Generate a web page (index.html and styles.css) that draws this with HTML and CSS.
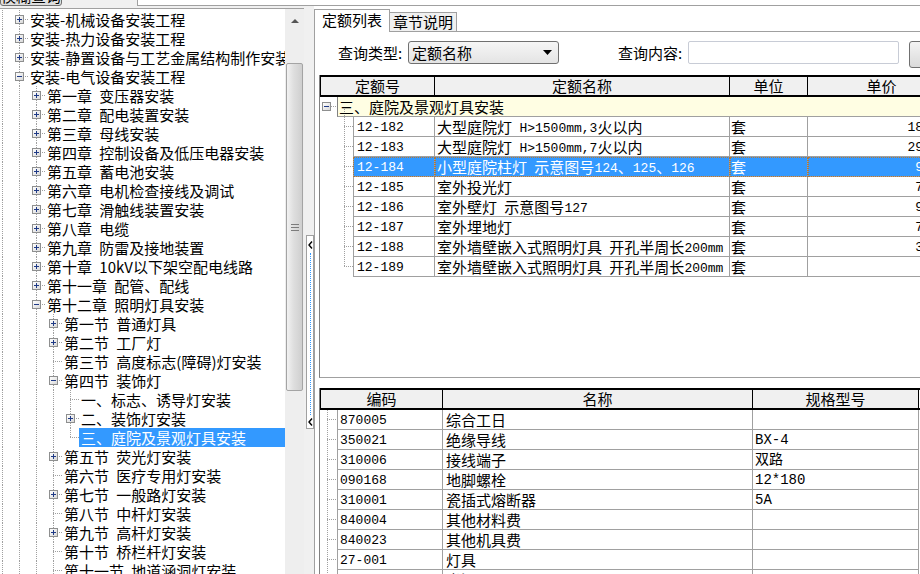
FILE: index.html
```html
<!DOCTYPE html>
<html lang="zh-CN">
<head>
<meta charset="utf-8">
<title>定额查询</title>
<link rel="stylesheet" href="styles.css">
</head>
<body>
<div class="topbar">
  <div class="topbtn">模糊查询</div>
  <div class="topinput"></div>
</div>
<div class="main">
  <div class="left">
    <div class="treebox">
      <div class="tree">
        <div class="tree-inner">
          <div class="tr"><span class="g v"></span><span class="n"><span class="box p"></span></span><span class="t">安装-机械设备安装工程</span></div>
          <div class="tr"><span class="g v"></span><span class="n"><span class="box p"></span></span><span class="t">安装-热力设备安装工程</span></div>
          <div class="tr"><span class="g v"></span><span class="n"><span class="box p"></span></span><span class="t">安装-静置设备与工艺金属结构制作安装工程</span></div>
          <div class="tr"><span class="g v"></span><span class="n"><span class="box m"></span></span><span class="t">安装-电气设备安装工程</span></div>
          <div class="tr"><span class="g v"></span><span class="g v"></span><span class="n"><span class="box p"></span></span><span class="t">第一章 变压器安装</span></div>
          <div class="tr"><span class="g v"></span><span class="g v"></span><span class="n"><span class="box p"></span></span><span class="t">第二章 配电装置安装</span></div>
          <div class="tr"><span class="g v"></span><span class="g v"></span><span class="n"><span class="box p"></span></span><span class="t">第三章 母线安装</span></div>
          <div class="tr"><span class="g v"></span><span class="g v"></span><span class="n"><span class="box p"></span></span><span class="t">第四章 控制设备及低压电器安装</span></div>
          <div class="tr"><span class="g v"></span><span class="g v"></span><span class="n"><span class="box p"></span></span><span class="t">第五章 蓄电池安装</span></div>
          <div class="tr"><span class="g v"></span><span class="g v"></span><span class="n"><span class="box p"></span></span><span class="t">第六章 电机检查接线及调试</span></div>
          <div class="tr"><span class="g v"></span><span class="g v"></span><span class="n"><span class="box p"></span></span><span class="t">第七章 滑触线装置安装</span></div>
          <div class="tr"><span class="g v"></span><span class="g v"></span><span class="n"><span class="box p"></span></span><span class="t">第八章 电缆</span></div>
          <div class="tr"><span class="g v"></span><span class="g v"></span><span class="n"><span class="box p"></span></span><span class="t">第九章 防雷及接地装置</span></div>
          <div class="tr"><span class="g v"></span><span class="g v"></span><span class="n"><span class="box p"></span></span><span class="t">第十章 10kV以下架空配电线路</span></div>
          <div class="tr"><span class="g v"></span><span class="g v"></span><span class="n"><span class="box p"></span></span><span class="t">第十一章 配管、配线</span></div>
          <div class="tr"><span class="g v"></span><span class="g v"></span><span class="n"><span class="box m"></span></span><span class="t">第十二章 照明灯具安装</span></div>
          <div class="tr"><span class="g v"></span><span class="g v"></span><span class="g v"></span><span class="n"><span class="box p"></span></span><span class="t">第一节 普通灯具</span></div>
          <div class="tr"><span class="g v"></span><span class="g v"></span><span class="g v"></span><span class="n"><span class="box p"></span></span><span class="t">第二节 工厂灯</span></div>
          <div class="tr"><span class="g v"></span><span class="g v"></span><span class="g v"></span><span class="n"></span><span class="t">第三节 高度标志(障碍)灯安装</span></div>
          <div class="tr"><span class="g v"></span><span class="g v"></span><span class="g v"></span><span class="n"><span class="box m"></span></span><span class="t">第四节 装饰灯</span></div>
          <div class="tr"><span class="g v"></span><span class="g v"></span><span class="g v"></span><span class="g v"></span><span class="n"></span><span class="t">一、标志、诱导灯安装</span></div>
          <div class="tr"><span class="g v"></span><span class="g v"></span><span class="g v"></span><span class="g v"></span><span class="n"><span class="box p"></span></span><span class="t">二、装饰灯安装</span></div>
          <div class="tr"><span class="g v"></span><span class="g v"></span><span class="g v"></span><span class="g v"></span><span class="n last"></span><span class="t sel">三、庭院及景观灯具安装</span></div>
          <div class="tr"><span class="g v"></span><span class="g v"></span><span class="g v"></span><span class="n"><span class="box p"></span></span><span class="t">第五节 荧光灯安装</span></div>
          <div class="tr"><span class="g v"></span><span class="g v"></span><span class="g v"></span><span class="n"></span><span class="t">第六节 医疗专用灯安装</span></div>
          <div class="tr"><span class="g v"></span><span class="g v"></span><span class="g v"></span><span class="n"><span class="box p"></span></span><span class="t">第七节 一般路灯安装</span></div>
          <div class="tr"><span class="g v"></span><span class="g v"></span><span class="g v"></span><span class="n"></span><span class="t">第八节 中杆灯安装</span></div>
          <div class="tr"><span class="g v"></span><span class="g v"></span><span class="g v"></span><span class="n"><span class="box p"></span></span><span class="t">第九节 高杆灯安装</span></div>
          <div class="tr"><span class="g v"></span><span class="g v"></span><span class="g v"></span><span class="n"></span><span class="t">第十节 桥栏杆灯安装</span></div>
          <div class="tr"><span class="g v"></span><span class="g v"></span><span class="g v"></span><span class="n"></span><span class="t">第十一节 地道涵洞灯安装</span></div>
        </div>
      </div>
      <div class="vscroll">
        <div class="up"></div>
        <div class="thumb"><div class="grip"></div></div>
      </div>
    </div>
  </div>
  <div class="mid">
    <div class="splitter">
      <svg class="chev" width="5" height="8" viewBox="0 0 5 8"><path d="M4 0.5 L1 4 L4 7.5" fill="none" stroke="#000" stroke-width="1.4"/></svg>
      <div class="sdots"></div>
      <svg class="chev" width="5" height="8" viewBox="0 0 5 8"><path d="M4 0.5 L1 4 L4 7.5" fill="none" stroke="#000" stroke-width="1.4"/></svg>
    </div>
  </div>
  <div class="right">
    <div class="tabs">
      <div class="tab active">定额列表</div>
      <div class="tab idle">章节说明</div>
    </div>
    <div class="page">
      <div class="query">
        <div class="qlabel">查询类型:</div>
        <div class="select"><span>定额名称</span><svg width="9" height="5" viewBox="0 0 9 5"><path d="M0 0H9L4.5 5Z" fill="#000"/></svg></div>
        <div class="qlabel qlabel2">查询内容:</div>
        <div class="qinput"></div>
        <div class="qbtn"></div>
      </div>

      <div class="grid1">
        <div class="hdr">
          <div class="hc c1">定额号</div>
          <div class="hc c2">定额名称</div>
          <div class="hc c3">单位</div>
          <div class="hc c4">单价</div>
        </div>
        <div class="grp">
          <div class="gexp"><span class="box m gbox"></span></div>
          <div class="gtext">三、庭院及景观灯具安装</div>
        </div>
        <div class="grow"><div class="tl1"></div><div class="dc code mono">12-182</div><div class="dc name">大型庭院灯 <span class="a">H&gt;1500mm,3</span>火以内</div><div class="dc unit">套</div><div class="dc price mono">1865.24</div></div>
        <div class="grow"><div class="tl1"></div><div class="dc code mono">12-183</div><div class="dc name">大型庭院灯 <span class="a">H&gt;1500mm,7</span>火以内</div><div class="dc unit">套</div><div class="dc price mono">2946.31</div></div>
        <div class="grow sel"><div class="tl1"></div><div class="dc code mono">12-184</div><div class="dc name">小型庭院柱灯 示意图号<span class="a">124</span>、<span class="a">125</span>、<span class="a">126</span></div><div class="dc unit">套</div><div class="dc price mono">966.76</div></div>
        <div class="grow"><div class="tl1"></div><div class="dc code mono">12-185</div><div class="dc name">室外投光灯</div><div class="dc unit">套</div><div class="dc price mono">735.52</div></div>
        <div class="grow"><div class="tl1"></div><div class="dc code mono">12-186</div><div class="dc name">室外壁灯 示意图号<span class="a">127</span></div><div class="dc unit">套</div><div class="dc price mono">942.18</div></div>
        <div class="grow"><div class="tl1"></div><div class="dc code mono">12-187</div><div class="dc name">室外埋地灯</div><div class="dc unit">套</div><div class="dc price mono">728.64</div></div>
        <div class="grow"><div class="tl1"></div><div class="dc code mono">12-188</div><div class="dc name">室外墙壁嵌入式照明灯具 开孔半周长<span class="a">200mm</span></div><div class="dc unit">套</div><div class="dc price mono">355.47</div></div>
        <div class="grow"><div class="tl1 last"></div><div class="dc code mono">12-189</div><div class="dc name">室外墙壁嵌入式照明灯具 开孔半周长<span class="a">200mm</span></div><div class="dc unit">套</div><div class="dc price mono"></div></div>
      </div>

      <div class="grid2">
        <div class="hdr">
          <div class="hc d1">编码</div>
          <div class="hc d2">名称</div>
          <div class="hc d3">规格型号</div>
        </div>
        <div class="grow"><div class="tl2"></div><div class="dc code2 mono">870005</div><div class="dc name2">综合工日</div><div class="dc spec mono"></div></div>
        <div class="grow"><div class="tl2"></div><div class="dc code2 mono">350021</div><div class="dc name2">绝缘导线</div><div class="dc spec mono">BX-4</div></div>
        <div class="grow"><div class="tl2"></div><div class="dc code2 mono">310006</div><div class="dc name2">接线端子</div><div class="dc spec mono">双路</div></div>
        <div class="grow"><div class="tl2"></div><div class="dc code2 mono">090168</div><div class="dc name2">地脚螺栓</div><div class="dc spec mono">12*180</div></div>
        <div class="grow"><div class="tl2"></div><div class="dc code2 mono">310001</div><div class="dc name2">瓷插式熔断器</div><div class="dc spec mono">5A</div></div>
        <div class="grow"><div class="tl2"></div><div class="dc code2 mono">840004</div><div class="dc name2">其他材料费</div><div class="dc spec mono"></div></div>
        <div class="grow"><div class="tl2"></div><div class="dc code2 mono">840023</div><div class="dc name2">其他机具费</div><div class="dc spec mono"></div></div>
        <div class="grow"><div class="tl2"></div><div class="dc code2 mono">27-001</div><div class="dc name2">灯具</div><div class="dc spec mono"></div></div>
        <div class="grow"><div class="tl2"></div><div class="dc code2 mono"></div><div class="dc name2">光源</div><div class="dc spec mono"></div></div>
      </div>
    </div>
  </div>
</div>
</body>
</html>
```
FILE: styles.css
```css
* { box-sizing: border-box; }
html, body { margin: 0; padding: 0; }
body {
  width: 920px;
  height: 574px;
  overflow: hidden;
  background: #f0f0f0;
  font-family: "Noto Sans CJK SC", sans-serif;
  font-size: 15px;
  color: #000;
  word-spacing: 4px;
}

/* top strip */
.topbar { height: 6px; display: flex; overflow: hidden; }
.topbtn {
  flex: none;
  width: 62px;
  height: 20px;
  margin-top: -14px;
  border: 1px solid #707070;
  border-radius: 3px;
  background: linear-gradient(#f2f2f2, #dcdcdc);
  line-height: 18px;
  text-align: center;
  white-space: nowrap;
  overflow: hidden;
}
.topinput {
  flex: 1;
  margin-left: 75px;
  height: 6px;
  background: #fff;
  border-left: 1px solid #a0a0a0;
  border-bottom: 1px solid #a0a0a0;
}

.main { display: flex; height: 568px; }

/* left tree */
.left { flex: none; width: 304px; padding-top: 2px; display: flex; flex-direction: column; }
.treebox { flex: 1; display: flex; border-top: 1px solid #a0a0a0; background: #fff; min-height: 0; }
.tree { flex: none; width: 285px; overflow: hidden; padding-top: 1px; }
.tree-inner { margin-left: -6px; }
.tr { display: flex; height: 19px; white-space: nowrap; }
.g, .n { flex: none; display: block; width: 17px; height: 19px; }
.v {
  background-image: repeating-linear-gradient(to bottom, #a0a0a0 0 1px, transparent 1px 2px);
  background-size: 1px 100%;
  background-position: 8px 0;
  background-repeat: no-repeat;
}
.n {
  background-image:
    repeating-linear-gradient(to bottom, #a0a0a0 0 1px, transparent 1px 2px),
    repeating-linear-gradient(to right, #a0a0a0 0 1px, transparent 1px 2px);
  background-size: 1px 100%, 9px 1px;
  background-position: 8px 0, 8px 9px;
  background-repeat: no-repeat;
}
.n.last { background-size: 1px 10px, 9px 1px; }
.box {
  display: block;
  width: 9px;
  height: 9px;
  margin: 5px 0 0 4px;
  border: 1px solid #8e8f8f;
}
.box.m {
  background:
    linear-gradient(#1f3a86, #1f3a86) center / 5px 1px no-repeat,
    linear-gradient(135deg, #ffffff, #d8d8d8);
}
.box.p {
  background:
    linear-gradient(#1f3a86, #1f3a86) center / 5px 1px no-repeat,
    linear-gradient(#1f3a86, #1f3a86) center / 1px 5px no-repeat,
    linear-gradient(135deg, #ffffff, #d8d8d8);
}
.t { line-height: 19px; padding: 0 2px; }
.t.sel { flex: 1; background: #3399ff; color: #fff; }

.vscroll {
  flex: none;
  width: 19px;
  background: #eeeeee;
  display: flex;
  flex-direction: column;
  align-items: center;
}
.up {
  margin-top: 10px;
  width: 0;
  height: 0;
  border-left: 4px solid transparent;
  border-right: 4px solid transparent;
  border-bottom: 4px solid #555;
}
.thumb {
  margin-top: 40px;
  width: 17px;
  height: 328px;
  border: 1px solid #a4a4a4;
  border-radius: 2px;
  background: linear-gradient(to right, #f2f2f2, #dedede 45%, #cfcfcf);
  display: flex;
  align-items: center;
  justify-content: center;
}
.grip {
  width: 8px;
  height: 7px;
  background: repeating-linear-gradient(to bottom, #7c7c7c 0 1px, transparent 1px 3px);
}

/* splitter */
.mid { flex: none; width: 10px; }
.splitter {
  margin: 229px 0 0 2px;
  width: 8px;
  height: 194px;
  border: 1px solid #a0a0a0;
  background: #fff;
  display: flex;
  flex-direction: column;
  align-items: center;
  padding: 5px 0 2px;
}
.chev { flex: none; display: block; }
.sdots { flex: 1; width: 1px; margin: 4px 0 3px 1px; border-left: 1px dotted #3399ff; }

/* right */
.right { flex: 1; min-width: 0; background: #fff; display: flex; flex-direction: column; overflow: hidden; }
.tabs { flex: none; display: flex; align-items: flex-end; height: 25px; }
.tab {
  flex: none;
  border: 1px solid #a0a0a0;
  border-bottom: none;
  text-align: center;
  margin-bottom: -1px;
  white-space: nowrap;
}
.tab.active { width: 76px; height: 23px; line-height: 20px; background: #fff; position: relative; }
.tab.idle { width: 68px; height: 20px; line-height: 18px; margin-left: -1px; background: #f0f0f0; }
.page { flex: 1; border-top: 1px solid #a0a0a0; border-left: 1px solid #a0a0a0; padding-left: 4px; }

.query { display: flex; align-items: flex-start; margin-top: 9px; padding-left: 19px; height: 27px; }
.qlabel { flex: none; width: 70px; line-height: 23px; white-space: nowrap; }
.qlabel2 { margin-left: 59px; }
.select {
  flex: none;
  width: 151px;
  height: 23px;
  border: 1px solid #707070;
  border-radius: 3px;
  background: linear-gradient(#f6f6f6, #e4e4e4);
  display: flex;
  align-items: center;
  justify-content: space-between;
  padding: 0 6px 0 3px;
  line-height: 21px;
}
.qinput { flex: none; width: 211px; height: 23px; border: 1px solid #c8ccd6; border-radius: 2px; background: #fff; }
.qbtn {
  flex: none;
  margin-left: 10px;
  width: 70px;
  height: 27px;
  border: 1px solid #707070;
  border-radius: 3px;
  background: linear-gradient(#f4f4f4, #dadada);
}

/* grids */
.grid1 { margin-top: 7px; width: 700px; height: 303px; border-left: 1px solid #808080; border-bottom: 1px solid #a0a0a0; }
.grid2 { margin-top: 10px; width: 700px; height: 200px; border-left: 1px solid #808080; }
.hdr { display: flex; height: 22px; border-top: 2px solid #000; border-bottom: 2px solid #000; border-left: 1px solid #000; }
.hc { flex: none; border-right: 1px solid #000; background: #f0f0f0; line-height: 18px; text-align: center; white-space: nowrap; }
.c1 { width: 114px; }
.c2 { width: 295px; }
.c3 { width: 78px; }
.c4 { width: 160px; padding-right: 12px; }
.d1 { width: 122px; }
.d2 { width: 310px; }
.d3 { width: 166px; }

.grp { display: flex; height: 20px; }
.gexp {
  flex: none;
  width: 17px;
  background-image: repeating-linear-gradient(to right, #a0a0a0 0 1px, transparent 1px 2px);
  background-size: 6px 1px;
  background-position: 11px 9px;
  background-repeat: no-repeat;
}
.gbox { margin: 5px 0 0 2px; }
.gtext {
  flex: none;
  width: 660px;
  background-color: #fffee3;
  background-image: repeating-linear-gradient(to bottom, #a0a0a0 0 1px, transparent 1px 2px);
  background-size: 1px 10px;
  background-position: 6px 10px;
  background-repeat: no-repeat;
  border-left: 1px solid #808080;
  border-bottom: 1px solid #a0a0a0;
  padding-left: 1px;
  line-height: 19px;
  white-space: nowrap;
}

.grow { display: flex; height: 20px; }
.tl1, .tl2 {
  flex: none;
  height: 20px;
  background-image:
    repeating-linear-gradient(to bottom, #a0a0a0 0 1px, transparent 1px 2px),
    repeating-linear-gradient(to right, #a0a0a0 0 1px, transparent 1px 2px);
  background-repeat: no-repeat;
}
.tl1 { width: 33px; background-size: 1px 100%, 9px 1px; background-position: 24px 0, 24px 9px; }
.tl1.last { background-size: 1px 10px, 9px 1px; }
.tl2 { width: 17px; background-size: 1px 100%, 10px 1px; background-position: 7px 0, 7px 9px; }

.dc {
  flex: none;
  height: 20px;
  line-height: 19px;
  border-right: 1px solid #a0a0a0;
  border-bottom: 1px solid #a0a0a0;
  white-space: nowrap;
  overflow: hidden;
}
.mono { font-family: "Liberation Mono", "Noto Sans CJK SC", monospace; font-size: 13px; line-height: 17px; padding-top: 2px; }
.a { font-family: "Liberation Mono", monospace; font-size: 13px; word-spacing: 0; vertical-align: 1px; }
.code { width: 82px; border-left: 1px solid #a0a0a0; padding-left: 3px; }
.name { width: 295px; padding-left: 2px; }
.unit { width: 78px; padding-left: 1px; }
.price { width: 160px; text-align: right; padding-right: 5px; }
.code2 { width: 106px; border-left: 1px solid #a0a0a0; padding-left: 2px; }
.name2 { width: 310px; padding-left: 3px; }
.spec { width: 166px; padding-left: 2px; }
.spec.mono { font-size: 14px; }

.sel .dc { background: #3399ff; color: #fff; outline: 1px dotted #b0783c; outline-offset: -1px; }
```
